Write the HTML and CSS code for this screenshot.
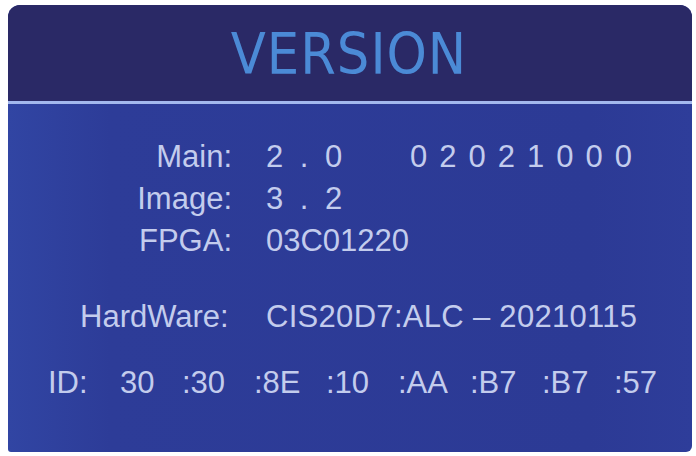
FILE: index.html
```html
<!DOCTYPE html>
<html>
<head>
<meta charset="utf-8">
<link rel="stylesheet" href="styles.css">
</head>
<body>
<div class="panel">
  <div class="header"><span class="title">VERSION</span></div>
  <div class="rule"></div>
  <div class="content">
    <div class="grid">
      <span class="label">Main:</span>
      <span class="val"><span class="spaced">2 . 0</span><span class="code">02021000</span></span>
      <span class="label">Image:</span>
      <span class="val"><span class="spaced">3 . 2</span></span>
      <span class="label">FPGA:</span>
      <span class="val">03C01220</span>
    </div>
    <div class="hw">
      <span class="hwlabel">HardWare:</span>
      <span class="hwval">CIS20D7:ALC – 20210115</span>
    </div>
    <div class="id">
      <span class="idlabel">ID:</span>
      <span class="tok first">30</span>
      <span class="tok">:30</span>
      <span class="tok">:8E</span>
      <span class="tok">:10</span>
      <span class="tok">:AA</span>
      <span class="tok">:B7</span>
      <span class="tok">:B7</span>
      <span class="tok">:57</span>
    </div>
  </div>
</div>
</body>
</html>
```
FILE: styles.css
```css
html, body {
  margin: 0;
  padding: 0;
  background: #ffffff;
}
body {
  padding: 5px 4px 4px 8px;
}
.panel {
  width: 684px;
  height: 447px;
  border-radius: 12px 12px 6px 3px;
  overflow: hidden;
  display: flex;
  flex-direction: column;
  background: linear-gradient(90deg, #3145a3 0%, #2d3c98 15%, #2c3a95 85%, #2e3d9a 100%);
}
.header {
  height: 96px;
  background: #2a2966;
  display: flex;
  align-items: center;
  justify-content: center;
}
.title {
  font-family: "DejaVu Sans Condensed", "DejaVu Sans", sans-serif;
  font-stretch: condensed;
  font-size: 57px;
  line-height: 1;
  color: #4b8ad6;
  letter-spacing: 1px;
  padding-top: 2px;
  padding-right: 2px;
}
.rule {
  height: 3px;
  background: #a3b8ee;
}
.content {
  flex: 1;
  font-family: "Liberation Sans", Arial, sans-serif;
  font-size: 31px;
  color: #c3cced;
  padding-top: 35px;
}
.grid {
  display: grid;
  grid-template-columns: 224px auto;
  column-gap: 34px;
  row-gap: 6px;
  line-height: 36px;
}
.label {
  text-align: right;
}
.val {
  display: flex;
}
.spaced {
  letter-spacing: 4px;
  width: 144px;
}
.code {
  letter-spacing: 12px;
}
.hw {
  display: flex;
  margin-top: 40px;
  line-height: 36px;
}
.hwlabel {
  width: 186px;
  padding-left: 72px;
}
.hwval {
  letter-spacing: 0.3px;
}
.id {
  display: flex;
  margin-top: 30px;
  padding-left: 40px;
  line-height: 36px;
}
.idlabel {
  width: 72px;
}
.tok {
  width: 72px;
}
.tok.first {
  width: 62px;
}
```
